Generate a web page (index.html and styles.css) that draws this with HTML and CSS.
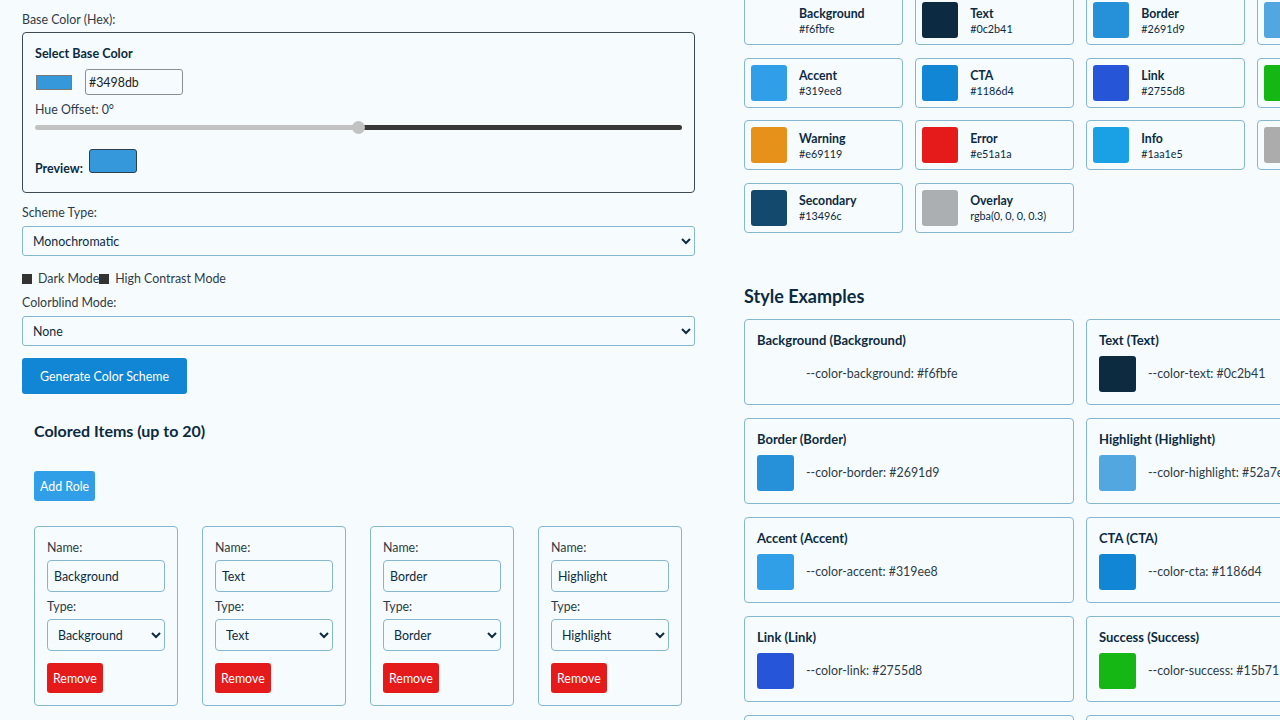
FILE: index.html
```html
<!DOCTYPE html>
<html lang="en">
<head>
<meta charset="utf-8">
<title>Color Scheme Generator</title>
<link rel="stylesheet" href="styles.css">
</head>
<body>
<div class="page">
  <section class="col left">
    <label class="lbl top-lbl">Base Color (Hex):</label>
    <div class="base-box">
      <h4 class="box-title">Select Base Color</h4>
      <div class="pick-row">
        <span class="color-input"><span class="chip"></span></span>
        <input class="hex" type="text" value="#3498db">
      </div>
      <div class="lbl hue-lbl">Hue Offset: 0°</div>
      <input class="hue" type="range" min="-180" max="180" value="0">
      <div class="preview-row"><strong>Preview:</strong><span class="preview"></span></div>
    </div>

    <label class="lbl field-lbl">Scheme Type:</label>
    <select class="wide"><option>Monochromatic</option></select>

    <div class="checks"><span class="cb"></span>Dark Mode<span class="cb"></span>High Contrast Mode</div>

    <label class="lbl field-lbl2">Colorblind Mode:</label>
    <select class="wide"><option>None</option></select>

    <button class="btn gen">Generate Color Scheme</button>

    <div class="items">
      <h3 class="items-title">Colored Items (up to 20)</h3>
      <button class="btn add">Add Role</button>
      <div class="roles">
        <div class="role">
          <label class="lbl">Name:</label>
          <input class="r-input" type="text" value="Background">
          <label class="lbl type-lbl">Type:</label>
          <select class="r-select"><option>Background</option></select>
          <button class="btn remove">Remove</button>
        </div>
        <div class="role">
          <label class="lbl">Name:</label>
          <input class="r-input" type="text" value="Text">
          <label class="lbl type-lbl">Type:</label>
          <select class="r-select"><option>Text</option></select>
          <button class="btn remove">Remove</button>
        </div>
        <div class="role">
          <label class="lbl">Name:</label>
          <input class="r-input" type="text" value="Border">
          <label class="lbl type-lbl">Type:</label>
          <select class="r-select"><option>Border</option></select>
          <button class="btn remove">Remove</button>
        </div>
        <div class="role">
          <label class="lbl">Name:</label>
          <input class="r-input" type="text" value="Highlight">
          <label class="lbl type-lbl">Type:</label>
          <select class="r-select"><option>Highlight</option></select>
          <button class="btn remove">Remove</button>
        </div>
      </div>
    </div>
  </section>

  <section class="col right">
    <div class="swatches">
      <div class="sw"><span class="chipbox" style="background:#f6fbfe"></span><div class="sw-text"><div class="sw-name">Background</div><div class="sw-hex">#f6fbfe</div></div></div>
      <div class="sw"><span class="chipbox" style="background:#0c2b41"></span><div class="sw-text"><div class="sw-name">Text</div><div class="sw-hex">#0c2b41</div></div></div>
      <div class="sw"><span class="chipbox" style="background:#2691d9"></span><div class="sw-text"><div class="sw-name">Border</div><div class="sw-hex">#2691d9</div></div></div>
      <div class="sw"><span class="chipbox" style="background:#52a7e0"></span><div class="sw-text"><div class="sw-name">Highlight</div><div class="sw-hex">#52a7e0</div></div></div>

      <div class="sw"><span class="chipbox" style="background:#319ee8"></span><div class="sw-text"><div class="sw-name">Accent</div><div class="sw-hex">#319ee8</div></div></div>
      <div class="sw"><span class="chipbox" style="background:#1186d4"></span><div class="sw-text"><div class="sw-name">CTA</div><div class="sw-hex">#1186d4</div></div></div>
      <div class="sw"><span class="chipbox" style="background:#2755d8"></span><div class="sw-text"><div class="sw-name">Link</div><div class="sw-hex">#2755d8</div></div></div>
      <div class="sw"><span class="chipbox" style="background:#15b715"></span><div class="sw-text"><div class="sw-name">Success</div><div class="sw-hex">#15b715</div></div></div>

      <div class="sw"><span class="chipbox" style="background:#e69119"></span><div class="sw-text"><div class="sw-name">Warning</div><div class="sw-hex">#e69119</div></div></div>
      <div class="sw"><span class="chipbox" style="background:#e51a1a"></span><div class="sw-text"><div class="sw-name">Error</div><div class="sw-hex">#e51a1a</div></div></div>
      <div class="sw"><span class="chipbox" style="background:#1aa1e5"></span><div class="sw-text"><div class="sw-name">Info</div><div class="sw-hex">#1aa1e5</div></div></div>
      <div class="sw"><span class="chipbox" style="background:#acacac"></span><div class="sw-text"><div class="sw-name">Disabled</div><div class="sw-hex">#acacac</div></div></div>

      <div class="sw"><span class="chipbox" style="background:#13496c"></span><div class="sw-text"><div class="sw-name">Secondary</div><div class="sw-hex">#13496c</div></div></div>
      <div class="sw"><span class="chipbox" style="background:rgba(0,0,0,0.3)"></span><div class="sw-text"><div class="sw-name">Overlay</div><div class="sw-hex">rgba(0, 0, 0, 0.3)</div></div></div>
    </div>

    <h2 class="ex-title">Style Examples</h2>
    <div class="examples">
      <div class="ex"><div class="ex-name">Background (Background)</div><div class="ex-row"><span class="ex-chip" style="background:#f6fbfe"></span><span class="ex-var">--color-background: #f6fbfe</span></div></div>
      <div class="ex"><div class="ex-name">Text (Text)</div><div class="ex-row"><span class="ex-chip" style="background:#0c2b41"></span><span class="ex-var">--color-text: #0c2b41</span></div></div>
      <div class="ex"><div class="ex-name">Border (Border)</div><div class="ex-row"><span class="ex-chip" style="background:#2691d9"></span><span class="ex-var">--color-border: #2691d9</span></div></div>
      <div class="ex"><div class="ex-name">Highlight (Highlight)</div><div class="ex-row"><span class="ex-chip" style="background:#52a7e0"></span><span class="ex-var">--color-highlight: #52a7e0</span></div></div>
      <div class="ex"><div class="ex-name">Accent (Accent)</div><div class="ex-row"><span class="ex-chip" style="background:#319ee8"></span><span class="ex-var">--color-accent: #319ee8</span></div></div>
      <div class="ex"><div class="ex-name">CTA (CTA)</div><div class="ex-row"><span class="ex-chip" style="background:#1186d4"></span><span class="ex-var">--color-cta: #1186d4</span></div></div>
      <div class="ex"><div class="ex-name">Link (Link)</div><div class="ex-row"><span class="ex-chip" style="background:#2755d8"></span><span class="ex-var">--color-link: #2755d8</span></div></div>
      <div class="ex"><div class="ex-name">Success (Success)</div><div class="ex-row"><span class="ex-chip" style="background:#15b715"></span><span class="ex-var">--color-success: #15b715</span></div></div>
      <div class="ex"><div class="ex-name">Warning (Warning)</div><div class="ex-row"><span class="ex-chip" style="background:#e69119"></span><span class="ex-var">--color-warning: #e69119</span></div></div>
      <div class="ex"><div class="ex-name">Error (Error)</div><div class="ex-row"><span class="ex-chip" style="background:#e51a1a"></span><span class="ex-var">--color-error: #e51a1a</span></div></div>
    </div>
  </section>
</div>
</body>
</html>
```

FILE: styles.css
```css
html, body {
  margin: 0;
  padding: 0;
  overflow: hidden;
  background: #f6fbfe;
}

body {
  font-family: Lato, "Noto Sans", sans-serif;
  font-size: 12.4px;
  color: #0c2b41;
}

.page {
  display: grid;
  grid-template-columns: 673px 672px;
  column-gap: 49px;
  padding: 0 22px;
  width: max-content;
  align-items: start;
}

.left {
  padding-top: 12px;
}

.right {
  margin-top: -5px;
}

.lbl {
  display: block;
  line-height: 16px;
  color: #2e3c47;
}

.top-lbl {
  margin-bottom: 4px;
}

.base-box {
  border: 1px solid #3b4a55;
  border-radius: 4px;
  padding: 12px 12px 14px;
}

.box-title {
  margin: 0;
  font-size: 12.6px;
  font-weight: 700;
  line-height: 18px;
  color: #0c2b41;
}

.pick-row {
  display: flex;
  align-items: center;
  margin-top: 6px;
  height: 26px;
}

.color-input {
  width: 50px;
  display: flex;
  align-items: center;
}

.chip {
  display: block;
  width: 34px;
  height: 13px;
  margin-left: 1px;
  background: #3498db;
  border: 1px solid #7a7a7a;
}

.hex {
  box-sizing: border-box;
  width: 98px;
  height: 26px;
  border: 1px solid #8a8f94;
  border-radius: 3px;
  padding: 0 3px;
  font: inherit;
  font-size: 12.4px;
  color: #222;
  background: #f6fbfe;
}

.hue-lbl {
  margin-top: 7px;
}

.hue {
  -webkit-appearance: none;
  appearance: none;
  display: block;
  width: 100%;
  height: 5px;
  margin: 7px 0 4px;
  border-radius: 3px;
  background: linear-gradient(to right, #c2c2c2 0, #c2c2c2 50%, #383838 50%, #383838 100%);
  outline: none;
}

.hue::-webkit-slider-thumb {
  -webkit-appearance: none;
  appearance: none;
  width: 13px;
  height: 13px;
  border-radius: 50%;
  background: #c2c2c2;
  border: none;
}

.preview-row {
  margin-top: 19px;
  line-height: 18px;
}

.preview-row strong {
  font-size: 12.4px;
  color: #0c2b41;
}

.preview {
  display: inline-block;
  width: 46px;
  height: 22px;
  margin-left: 6px;
  background: #3498db;
  border: 1px solid #2b3f50;
  border-radius: 3px;
}

.field-lbl {
  margin-top: 12px;
  margin-bottom: 5px;
}

.field-lbl2 {
  margin-top: 8px;
  margin-bottom: 5px;
}

.wide {
  display: block;
  box-sizing: border-box;
  width: 100%;
  height: 30px;
  padding: 0 6px;
  border: 1px solid #86b7d1;
  border-radius: 3px;
  background: #f6fbfe;
  font: inherit;
  font-size: 12.4px;
  color: #0c2b41;
}

.checks {
  display: flex;
  align-items: center;
  margin-top: 15px;
  line-height: 16px;
  color: #2e3c47;
}

.cb {
  display: inline-block;
  width: 10px;
  height: 10px;
  background: #333;
  margin-right: 6px;
}

.btn {
  border: none;
  border-radius: 3px;
  color: #fff;
  font: inherit;
  font-size: 12.4px;
  cursor: pointer;
}

.gen {
  display: block;
  margin-top: 12px;
  height: 36px;
  padding: 0 18px;
  background: #1186d4;
}

.items {
  padding: 0 12px;
}

.items-title {
  margin: 26px 0 0;
  font-size: 16px;
  font-weight: 700;
  line-height: 22px;
  color: #0c2b41;
}

.add {
  display: block;
  margin-top: 29px;
  height: 30px;
  padding: 0 6px;
  background: #319ee8;
}

.roles {
  display: flex;
  gap: 24px;
  margin-top: 25px;
}

.role {
  box-sizing: border-box;
  width: 144px;
  border: 1px solid #86b7d1;
  border-radius: 4px;
  padding: 12px 12px 12px;
}

.role .lbl {
  line-height: 18px;
  margin-bottom: 3px;
}

.role .type-lbl {
  margin-top: 6px;
  margin-bottom: 3px;
}

.r-input,
.r-select {
  display: block;
  box-sizing: border-box;
  width: 100%;
  height: 32px;
  border: 1px solid #86b7d1;
  border-radius: 4px;
  background: #f6fbfe;
  font: inherit;
  font-size: 12.4px;
  color: #0c2b41;
}

.r-input {
  padding: 0 6px;
}

.r-select {
  padding: 0 6px;
}

.remove {
  display: block;
  margin-top: 12px;
  height: 30px;
  padding: 0 6px;
  background: #e51a1a;
}

.swatches {
  display: grid;
  grid-template-columns: repeat(4, 1fr);
  column-gap: 12.5px;
  row-gap: 12.5px;
}

.sw {
  box-sizing: border-box;
  height: 50px;
  display: flex;
  align-items: center;
  gap: 12px;
  padding: 0 6px;
  border: 1px solid #86b7d1;
  border-radius: 4px;
}

.chipbox {
  flex: none;
  width: 36px;
  height: 36px;
  border-radius: 3px;
}

.sw-name {
  font-size: 12.3px;
  font-weight: 700;
  line-height: 17px;
  color: #0c2b41;
}

.sw-hex {
  font-size: 10.8px;
  line-height: 14px;
  color: #0c2b41;
}

.ex-title {
  margin: 51px 0 11px;
  font-size: 18px;
  font-weight: 700;
  line-height: 24px;
  color: #0c2b41;
}

.examples {
  display: grid;
  grid-template-columns: 1fr 1fr;
  column-gap: 12px;
  row-gap: 13px;
}

.ex {
  box-sizing: border-box;
  height: 86px;
  border: 1px solid #86b7d1;
  border-radius: 4px;
  padding: 11px 12px 12px;
}

.ex-name {
  font-size: 13px;
  font-weight: 700;
  line-height: 18px;
  color: #0c2b41;
}

.ex-row {
  display: flex;
  align-items: center;
  gap: 12px;
  margin-top: 7px;
}

.ex-chip {
  flex: none;
  width: 37px;
  height: 36px;
  border-radius: 3px;
}

.ex-var {
  font-size: 12.4px;
  color: #2e3c47;
}
```
